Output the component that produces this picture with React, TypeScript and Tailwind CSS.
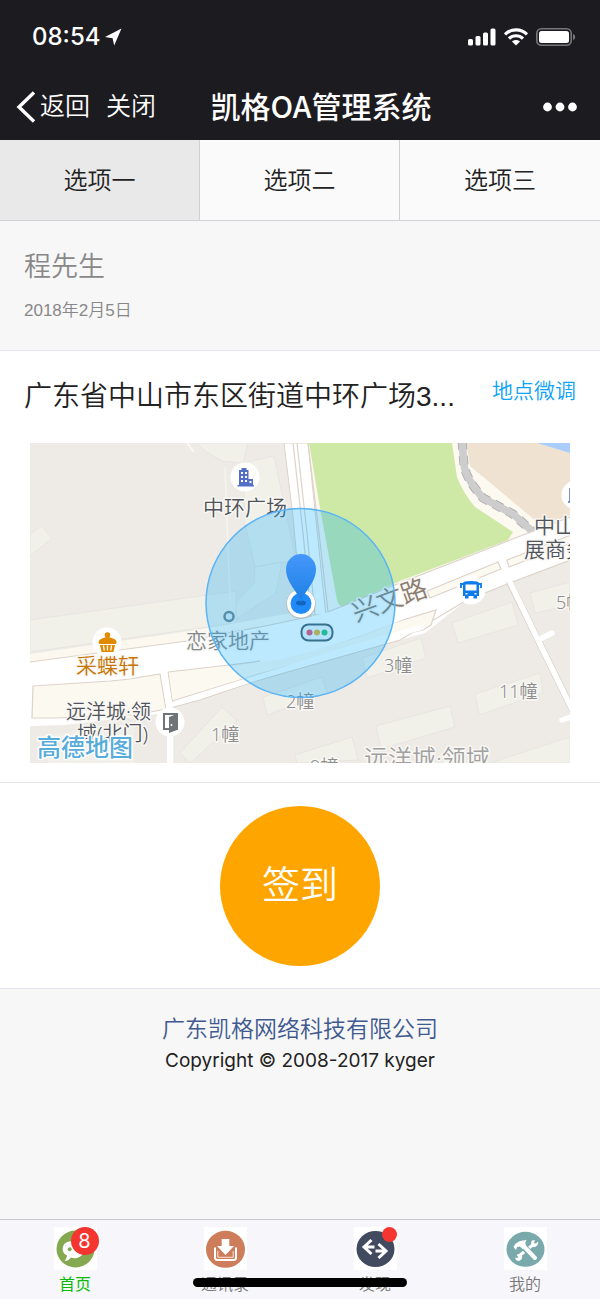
import React, { useState } from "react";

const TABS = ["选项一", "选项二", "选项三"];

// 手机状态栏
const StatusBar: React.FC = () => (
  <div className="flex h-[74px] items-center justify-between pl-8 pr-6">
    <div className="flex items-center gap-1 text-2xl font-medium">
      <span>08:54</span>
      <svg width="18" height="18" viewBox="0 0 18 18" fill="#fff">
        <path d="M17.5 0.5 L10.2 17.5 L8.6 10.2 L1 9 Z" />
      </svg>
    </div>
    <div className="flex items-center gap-2">
      <svg width="28" height="18" viewBox="0 0 28 18" fill="#fff">
        <rect x="0" y="11" width="5" height="6.5" rx="1.5" />
        <rect x="7.5" y="8" width="5" height="9.5" rx="1.5" />
        <rect x="15" y="4.5" width="5" height="13" rx="1.5" />
        <rect x="22.5" y="0.5" width="5" height="17" rx="1.5" />
      </svg>
      <svg width="24" height="18" viewBox="0 0 24 18" fill="none" stroke="#fff" strokeWidth="3.2">
        <path d="M1 6.4 C7 0.4 17 0.4 23 6.4" />
        <path d="M5 10.6 C9 6.8 15 6.8 19 10.6" />
        <path d="M8 13.6 C10.2 11.6 13.8 11.6 16 13.6 L12 17.6 Z" fill="#fff" stroke="none" />
      </svg>
      <svg width="40" height="18" viewBox="0 0 40 18">
        <rect x="0.8" y="0.8" width="34.4" height="16.4" rx="4.5" fill="none" stroke="#77777b" strokeWidth="1.6" />
        <rect x="3" y="3" width="30" height="12" rx="2.5" fill="#fff" />
        <path d="M37 6 Q39.2 6.5 39.2 9 Q39.2 11.5 37 12 Z" fill="#77777b" />
      </svg>
    </div>
  </div>
);

// 导航栏
const NavBar: React.FC = () => (
  <div className="grid h-[66px] grid-cols-[1fr_auto_1fr] items-center px-4">
    <div className="flex items-center gap-4 text-[25px] font-[350]">
      <button className="flex items-center gap-1">
        <svg width="20" height="32" viewBox="0 0 20 32" fill="none" stroke="#fff" strokeWidth="3.4">
          <path d="M18 1.5 L3 16 L18 30.5" />
        </svg>
        返回
      </button>
      <button>关闭</button>
    </div>
    <h1 className="pb-1 pl-[42px] font-[Noto_Sans_CJK_SC,sans-serif] text-[30px] font-medium">凯格OA管理系统</h1>
    <button aria-label="更多" className="justify-self-end pr-1.5">
      <svg width="36" height="10" viewBox="0 0 36 10" fill="#fff">
        <circle cx="5.5" cy="5" r="4.4" />
        <circle cx="18" cy="5" r="4.4" />
        <circle cx="30.5" cy="5" r="4.4" />
      </svg>
    </button>
  </div>
);

// 地图上的楼栋
const BUILDINGS = [
  "0,91 12,83 22,95 0,113",
  "167,0 175,8 192,18 213,20 218,0",
  "213,20 244,13 266,117 225,124 215,80",
  "225,124 252,119 246,150 206,176 206,160 224,140",
  "0,177 206,148 206,180 0,209",
  "150,310 192,264 207,278 160,320",
  "233,254 292,234 297,250 237,272",
  "265,312 322,294 328,317 267,320",
  "332,215 391,195 396,215 337,235",
  "346,283 420,263 425,284 351,306",
  "422,180 482,159 488,182 428,200",
  "445,251 510,230 513,250 449,272",
  "460,320 540,294 540,320",
  "500,150 540,139 540,162 505,170",
  "18,292 104,276 104,320 18,320",
];

const LABELS = [
  { text: "中环广场", x: 173, y: 72, size: 21, color: "#50535a" },
  { text: "恋家地产", x: 156, y: 205, size: 21, color: "#85898c" },
  { text: "采蝶轩", x: 46, y: 230, size: 21, color: "#c87400" },
  { text: "远洋城·领", x: 36, y: 276, size: 20, color: "#50535a" },
  { text: "域(北门)", x: 47, y: 298, size: 20, color: "#50535a" },
  { text: "1幢", x: 181, y: 298, size: 18, color: "#8c8c8c" },
  { text: "2幢", x: 256, y: 265, size: 18, color: "#8c8c8c" },
  { text: "3幢", x: 354, y: 229, size: 18, color: "#8c8c8c" },
  { text: "5幢", x: 526, y: 166, size: 18, color: "#8c8c8c" },
  { text: "9幢", x: 280, y: 330, size: 18, color: "#8c8c8c" },
  { text: "11幢", x: 469, y: 255, size: 18, color: "#8c8c8c" },
  { text: "远洋城·领域", x: 334, y: 324, size: 24, color: "#a0a0a0" },
  { text: "中山", x: 504, y: 90, size: 21, color: "#50535a" },
  { text: "展商务", x: 494, y: 114, size: 21, color: "#50535a" },
];

const MapView: React.FC = () => (
  <svg
    viewBox="0 0 540 320"
    className="block w-full font-[Noto_Sans,Noto_Sans_CJK_SC,sans-serif] font-[350]"
    role="img"
    aria-label="签到地点地图"
  >
    <rect width="540" height="320" fill="#eeebe6" />
    <g fill="#f1f1ea" stroke="#e7e5e0" strokeWidth="1">
      {BUILDINGS.map((points) => (
        <polygon key={points} points={points} />
      ))}
    </g>
    <path d="M195 24 L200 157 L202 180" stroke="#f6f4ee" strokeWidth="1.5" fill="none" />
    <path d="M157 0 L164 9" stroke="#faf8f2" strokeWidth="2" />

    {/* 绿地、河流和铁路 */}
    <polygon points="278,0 432,0 540,74 480,97 370,139 295,172" fill="#fcf9f1" />
    <path d="M279 0 H422 L427 34 Q433 50 445 64 L483 89 L478 97 L370 138 L318 162 Q309 166 307 157 L290 65 Z" fill="#cee8a6" />
    <polygon points="430,0 507,0 540,10 540,72 502,86 498,76 440,24" fill="#fcf9f1" />
    <polygon points="436,0 507,0 540,10 540,72 512,83 440,23" fill="#efe2d0" />
    <polygon points="507,0 540,0 540,10" fill="#a9cdfd" />
    <path d="M432 -2 L434 22 Q436 36 453 55 L483 71 L503 89" fill="none" stroke="#a9a9a9" strokeWidth="9" strokeDasharray="9 6" />
    <path d="M432 -2 L434 22 Q436 36 453 55 L483 71 L503 89" fill="none" stroke="#cdcdcd" strokeWidth="7.5" />

    {/* 道路 */}
    <polygon points="0,211 160,188 285,166 290,172 160,198 0,219" fill="#fcf8f0" />
    <path d="M254 0 L263 74 L272 172 H296 L293 145 L278 0 Z" fill="#fff" stroke="#ddd3c9" strokeWidth="1" />
    <path d="M224 0 L254 0" stroke="none" />
    <path d="M0 219 L157 198 L284 173 L296 170 L370 140 L480 97 L540 74 V117 L480 140 L437 157 L395 190 L370 197 L223 239 L170 257 L140 265 L137 282 L0 283 Z" fill="#fff" />
    <g fill="none" stroke="#ddd3c9" strokeWidth="1.2">
      <path d="M0 219 L157 198 L240 182 L282 173" />
      <path d="M263 0 L273 90 L281 172 M267 0 L277 90 L285 172" />
      <path d="M278 0 L289 90 L298 169 L370 140 L480 97 L540 74" />
      <path d="M140 265 L170 257 L223 239 L370 197 L437 157 L480 140 L540 117" />
    </g>
    <g fill="#fcf9f1" stroke="#ddd3c9" strokeWidth="1.2">
      <path d="M3 243 L80 238 L100 236 L130 231 L136 266 L104 272 L24 275 L2 275 Z" />
      <path d="M138 229 L190 223 Q280 215 363 180 L406 167 L401 182 L393 187 L370 192 L300 211 L223 233 L142 258 Z" />
      <path d="M397 148 L468 119 L471 126 L400 155 Z" />
      <path d="M477 117 L541 92 V100 L479 124 Z" />
    </g>
    <path d="M150 259 L223 236 L340 199 L393 184" stroke="#fff" strokeWidth="5" fill="none" />
    <path d="M230 217 Q300 207 405 160" stroke="#fff" strokeWidth="5" fill="none" />
    <path d="M134 228 L140 268 V322" stroke="#fff" strokeWidth="6.5" fill="none" />
    <polygon points="2,283 34,282 137,270 137,320 2,320" fill="#eeebe6" />
    <polygon points="18,292 104,281 104,320 18,320" fill="#f0efe9" />
    <g fill="none" strokeLinecap="round">
      <path d="M480 140 L508 197 L543 268" stroke="#d9d3cb" strokeWidth="7" />
      <path d="M479 137 L508 197 L543 268 M508 197 L522 190 M532 277 L544 273" stroke="#fff" strokeWidth="5.5" />
    </g>

    {/* 地名 */}
    <g stroke="#f8f7f4" strokeWidth="3" strokeLinejoin="round" paintOrder="stroke">
      {LABELS.map((label) => (
        <text key={label.text} x={label.x} y={label.y} fontSize={label.size} fill={label.color}>
          {label.text}
        </text>
      ))}
      <text x="326" y="179" fontSize="26" fill="#8b7c70" transform="rotate(-20 326 179)">
        兴文路
      </text>
      <text x="7" y="313" fontSize="24" fontWeight="500" fill="#58acd9" stroke="#fff">
        高德地图
      </text>
    </g>

    {/* 地点图标 */}
    <g fill="#fff">
      <circle cx="215" cy="34" r="14.5" />
      <circle cx="77" cy="199" r="14.5" />
      <circle cx="140" cy="279" r="14.5" />
      <circle cx="441" cy="147" r="14.5" />
      <circle cx="546" cy="52" r="14.5" />
    </g>
    <path d="M209 42 V27 H211.500 V25 H216.500 V27 H218.500 V36 H223 V42 H224 V43.500 H207.500 V42 Z" fill="#5470c6" />
    <path d="M211 29 h2 v2 h-2z M215 29 h2 v2 h-2z M211 33 h2 v2 h-2z M215 33 h2 v2 h-2z M211 37 h2 v2 h-2z M215 37 h2 v2 h-2z M219.500 38 h2 v2 h-2z" fill="#fff" />
    <path d="M540 45 V59 H538" stroke="#5470c6" strokeWidth="1.5" fill="none" />
    <g fill="#e08a00">
      <circle cx="77.500" cy="192" r="2.800" />
      <path d="M69 201 Q67.500 197 72 195.500 Q77.500 192.500 83 195.500 Q88 197 86 201 Z" />
      <path d="M70 202 H85 L83.500 209 H71.500 Z" />
    </g>
    <path d="M73.500 202.500 l0.700 5 M77.500 202.500 v5 M81.500 202.500 l-0.700 5" stroke="#fff" strokeWidth="1.3" />
    <path d="M139 286 H134 V271 H147 V287" fill="none" stroke="#6f7478" strokeWidth="2" />
    <path d="M139 274 L147 271 V287 L139 290 Z" fill="#6f7478" />
    <circle cx="141.500" cy="282" r="1" fill="#fff" />
    <path d="M433 140 Q433 138 441 138 Q449 138 449 140 V153 H447 V155.500 H443.500 V153 H438.500 V155.500 H435 V153 H433 Z" fill="#0e7bea" />
    <path d="M431 145 V141 H433 M451 145 V141 H449" stroke="#0e7bea" strokeWidth="1.800" fill="none" />
    <path d="M435.500 141.500 H446.500 V147.500 H435.500 Z M435.500 150 h2 v1.500 h-2z M444.500 150 h2 v1.500 h-2z" fill="#fff" />
    <circle cx="199" cy="173.500" r="4.500" fill="#e8eef0" stroke="#74868f" strokeWidth="2.500" />
    <rect x="271.500" y="181.500" width="31" height="16" rx="7" fill="#f2f6f8" stroke="#4b5d66" strokeWidth="2" />
    <circle cx="279.500" cy="189.500" r="3" fill="#ea4f6f" />
    <circle cx="287" cy="189.500" r="3" fill="#e8b22a" />
    <circle cx="294.500" cy="189.500" r="3" fill="#31bf73" />

    {/* 签到范围和当前位置 */}
    <circle cx="270.500" cy="160" r="94.500" fill="#00aaff" fillOpacity="0.26" stroke="#5ab4f5" strokeWidth="1.500" />
    <circle cx="271" cy="161" r="15" fill="#b9b3a6" opacity="0.600" />
    <circle cx="271" cy="160.500" r="14" fill="#fff" />
    <circle cx="271" cy="160.500" r="10.500" fill="#1f8bfb" />
    <ellipse cx="271" cy="160" rx="5" ry="2.500" fill="#1463bd" />
    <path d="M271 160 C268 148 256 140 256 126 A15 15 0 0 1 286 126 C286 140 274 148 271 160 Z" fill="url(#pin)" />
    <defs>
      <linearGradient id="pin" x1="0" y1="0" x2="0" y2="1">
        <stop offset="0" stopColor="#4697fb" />
        <stop offset="1" stopColor="#1b80e4" />
      </linearGradient>
    </defs>
  </svg>
);

// 底部菜单图标
const ChatIcon: React.FC = () => (
  <svg viewBox="0 0 43 43" className="size-[43px] bg-white">
    <ellipse cx="21.5" cy="22" rx="19" ry="18.500" fill="#85a951" />
    <path d="M9 20 C10 15 16 13 23 15 C31 17 33 25 27 29 C23 32 19 31.500 17 30.500 C15 33 13 34 10.500 34 C12 32 12.500 31 13 28.500 C9.500 26.500 8 24 9 20 Z" fill="#fff" />
    <circle cx="15.700" cy="22.300" r="2" fill="#85a951" />
  </svg>
);

const InboxIcon: React.FC = () => (
  <svg viewBox="0 0 43 43" className="size-[43px] bg-white">
    <ellipse cx="21.500" cy="22.300" rx="19.500" ry="18.500" fill="#cd7d5a" />
    <path d="M17.700 12 H25.300 V19 H30 L21.500 28 L13 19 H17.700 Z" fill="#fff" />
    <path d="M11 20.500 V30.500 Q11 33 13.500 33 H29.500 Q32 33 32 30.500 V20.500" fill="none" stroke="#fff" strokeWidth="2" />
    <path d="M13.800 24 V30.300 H29.200 V24" fill="none" stroke="#fff" strokeWidth="0.800" />
  </svg>
);

const ExchangeIcon: React.FC = () => (
  <svg viewBox="0 0 43 43" className="size-[43px] bg-white">
    <ellipse cx="21.500" cy="22" rx="19" ry="18" fill="#424a60" />
    <g fill="none" stroke="#fff" strokeWidth="3">
      <path d="M20.500 20 H10 M17.500 13 L10 20 L17.500 27" />
      <path d="M21.500 24 H32 M24.500 17 L32 24 L24.500 31" />
    </g>
  </svg>
);

const ToolsIcon: React.FC = () => (
  <svg viewBox="0 0 43 43" className="size-[43px] bg-white">
    <ellipse cx="21.500" cy="22.300" rx="19" ry="17.500" fill="#79a9ab" />
    <path d="M15 29 L30 17" stroke="#fff" strokeWidth="3" />
    <path d="M28 14 Q26.500 18 29 19.500 Q33 20.500 34 15.500 L31 17 L29.500 16 L30.500 13.500 Z" fill="#fff" stroke="#fff" strokeWidth="0.800" />
    <path d="M17.500 29 Q16 26.500 13 28 L14.500 30 L13.500 31.500 L11.500 31 Q12 34 15 33.500 Q18.500 32.500 17.500 29 Z" fill="#fff" stroke="#fff" strokeWidth="0.800" />
    <path d="M18 18 L31.500 32" stroke="#79a9ab" strokeWidth="6.500" />
    <path d="M19.500 19 L31 31" stroke="#fff" strokeWidth="4" strokeLinecap="round" />
    <path d="M9.500 20 Q11 16 16 14 L22.500 13 Q20.500 15.500 22 18 L18.500 22 L16 19.500 L13 20 L12 23 Z" fill="#fff" />
  </svg>
);

const MENU = [
  { label: "首页", Icon: ChatIcon, badge: "8", dot: false },
  { label: "通讯录", Icon: InboxIcon, badge: "", dot: false },
  { label: "发现", Icon: ExchangeIcon, badge: "", dot: true },
  { label: "我的", Icon: ToolsIcon, badge: "", dot: false },
];

const App: React.FC = () => {
  const [activeTab, setActiveTab] = useState(0);
  const [activeMenu, setActiveMenu] = useState(0);

  return (
    <div className="flex min-h-screen flex-col bg-[#f7f7f7] font-[Inter,Noto_Sans_CJK_SC,sans-serif] text-[#222]">
      <header className="bg-[#1c1b20] text-white">
        <StatusBar />
        <NavBar />
      </header>

      <div className="grid grid-cols-3 divide-x divide-[#d0d0d2] border-b border-[#d0d0d6]">
        {TABS.map((tab, index) => (
          <button
            key={tab}
            onClick={() => setActiveTab(index)}
            className={`h-20 pt-0.5 text-2xl font-[350] ${activeTab === index ? "bg-[#e9e9e9]" : "bg-[#fafafa]"}`}
          >
            {tab}
          </button>
        ))}
      </div>

      <main className="flex-1">
        <section className="px-6 pt-[26px] pb-[27px] font-[350] text-[#888]">
          <h2 className="text-[27px] leading-10">程先生</h2>
          <p className="pt-3 font-[Liberation_Sans,Noto_Sans_CJK_SC,sans-serif] text-[17px] leading-6">2018年2月5日</p>
        </section>

        <section className="border-y border-[#e6e6ee] bg-white pb-[19px]">
          <div className="flex items-start justify-between px-6 pt-5 pb-5">
            <h3 className="font-[Liberation_Sans,Noto_Sans_CJK_SC,sans-serif] text-[28px] leading-[52px] font-[350]">
              广东省中山市东区街道中环广场3...
            </h3>
            <a href="#adjust" className="text-[21px] leading-10 font-[350] text-[#0ba2f7]">
              地点微调
            </a>
          </div>
          <div className="px-[30px]">
            <MapView />
          </div>
        </section>

        <section className="flex justify-center border-b border-[#e6e6ee] bg-white pt-[23px] pb-[22px]">
          <button className="size-40 rounded-full bg-[#ffa500] pb-1 text-[38px] font-[350] text-white">签到</button>
        </section>

        <footer className="pt-6 text-center">
          <a href="#company" className="block text-[23px] leading-8 font-[350] text-[#405a90]">
            广东凯格网络科技有限公司
          </a>
          <p className="text-[19px] leading-8">Copyright © 2008-2017 kyger</p>
        </footer>
      </main>

      <nav className="relative grid h-20 grid-cols-4 border-t border-[#c8c8cc] bg-[#f7f7fb]">
        {MENU.map(({ label, Icon, badge, dot }, index) => (
          <button
            key={label}
            onClick={() => setActiveMenu(index)}
            className={`flex flex-col items-center pt-[7px] text-base ${activeMenu === index ? "text-[#09bb07]" : "font-[350] text-[#777]"}`}
          >
            <span className="relative">
              <Icon />
              {badge && (
                <span className="absolute top-0 -right-0.5 flex size-7 items-center justify-center rounded-full bg-[#f43530] text-xl text-white">
                  {badge}
                </span>
              )}
              {dot && <span className="absolute top-0 right-0 size-[15px] rounded-full bg-[#f43530]" />}
            </span>
            <span className="leading-7">{label}</span>
          </button>
        ))}
        <div className="absolute bottom-3 left-1/2 h-[9px] w-[214px] -translate-x-1/2 rounded-full bg-black" />
      </nav>
    </div>
  );
};

export default App;
